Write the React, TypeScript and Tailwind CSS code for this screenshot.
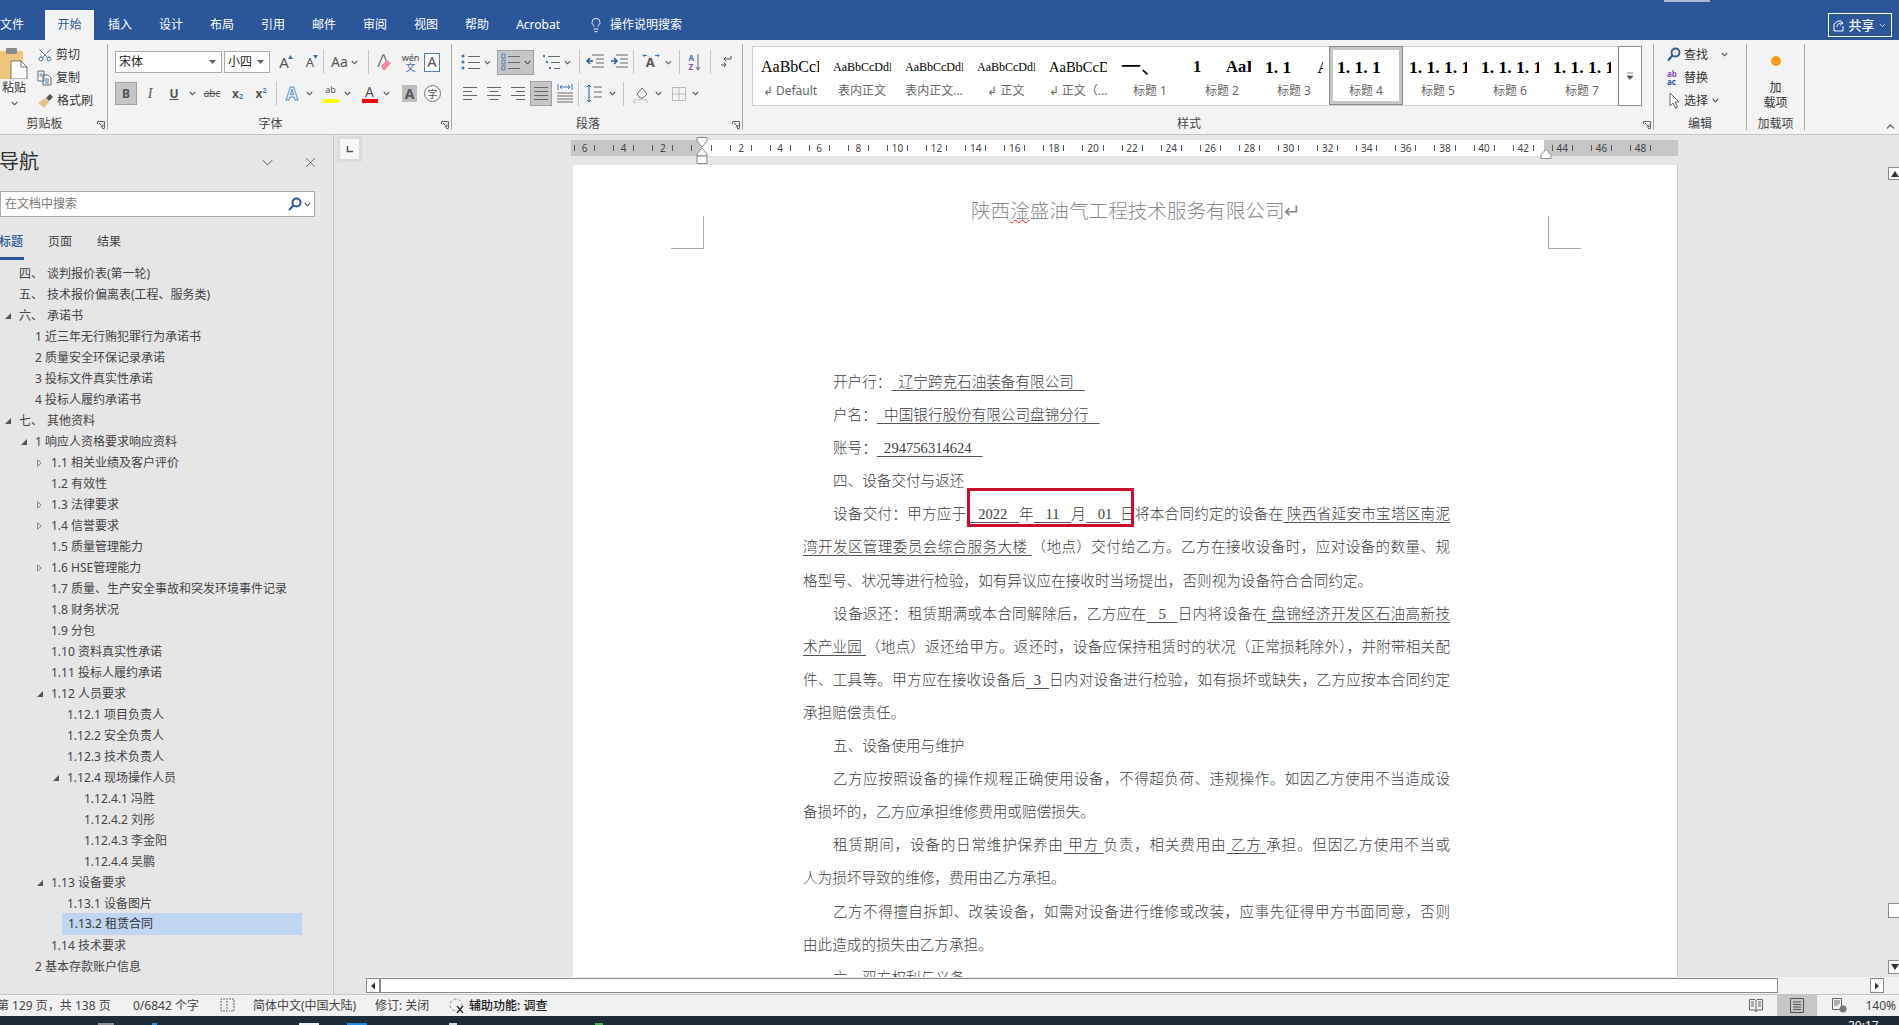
import React from 'react';
import { ChevronDown, ChevronUp, Lightbulb, Scissors, X } from 'lucide-react';

const tabs = ['插入', '设计', '布局', '引用', '邮件', '审阅', '视图', '帮助'];

type Row = { level: number; text: string; tri?: 'open' | 'closed'; lead?: string; selected?: boolean };

const tree: Row[] = [
  { level: 0, lead: '四、', text: '谈判报价表(第一轮)' },
  { level: 0, lead: '五、', text: '技术报价偏离表(工程、服务类)' },
  { level: 0, lead: '六、', text: '承诺书', tri: 'open' },
  { level: 1, text: '1 近三年无行贿犯罪行为承诺书' },
  { level: 1, text: '2 质量安全环保记录承诺' },
  { level: 1, text: '3 投标文件真实性承诺' },
  { level: 1, text: '4 投标人履约承诺书' },
  { level: 0, lead: '七、', text: '其他资料', tri: 'open' },
  { level: 1, text: '1 响应人资格要求响应资料', tri: 'open' },
  { level: 2, text: '1.1 相关业绩及客户评价', tri: 'closed' },
  { level: 2, text: '1.2 有效性' },
  { level: 2, text: '1.3 法律要求', tri: 'closed' },
  { level: 2, text: '1.4 信誉要求', tri: 'closed' },
  { level: 2, text: '1.5 质量管理能力' },
  { level: 2, text: '1.6 HSE管理能力', tri: 'closed' },
  { level: 2, text: '1.7 质量、生产安全事故和突发环境事件记录' },
  { level: 2, text: '1.8 财务状况' },
  { level: 2, text: '1.9 分包' },
  { level: 2, text: '1.10 资料真实性承诺' },
  { level: 2, text: '1.11 投标人履约承诺' },
  { level: 2, text: '1.12 人员要求', tri: 'open' },
  { level: 3, text: '1.12.1 项目负责人' },
  { level: 3, text: '1.12.2 安全负责人' },
  { level: 3, text: '1.12.3 技术负责人' },
  { level: 3, text: '1.12.4 现场操作人员', tri: 'open' },
  { level: 4, text: '1.12.4.1 冯胜' },
  { level: 4, text: '1.12.4.2 刘彤' },
  { level: 4, text: '1.12.4.3 李金阳' },
  { level: 4, text: '1.12.4.4 吴鹏' },
  { level: 2, text: '1.13 设备要求', tri: 'open' },
  { level: 3, text: '1.13.1 设备图片' },
  { level: 3, text: '1.13.2 租赁合同', selected: true },
  { level: 2, text: '1.14 技术要求' },
  { level: 1, text: '2 基本存款账户信息' },
];

const levelPad = ['pl-[5px]', 'pl-[21px]', 'pl-[37px]', 'pl-[53px]', 'pl-[70px]'];

const styleItems = [
  { sample: 'AaBbCcI', label: '↲ Default', cls: 'text-[16px]' },
  { sample: 'AaBbCcDdEe', label: '表内正文', cls: 'text-[12px]' },
  { sample: 'AaBbCcDdEe', label: '表内正文...', cls: 'text-[12px]' },
  { sample: 'AaBbCcDdEe', label: '↲ 正文', cls: 'text-[12px]' },
  { sample: 'AaBbCcDd', label: '↲ 正文\uFF08...', cls: 'text-[14.5px]' },
  { sample: '一、', label: '标题 1', cls: 'text-[20px]' },
  { sample: '1\u00a0\u00a0\u00a0\u00a0\u00a0\u00a0AaI', label: '标题 2', cls: 'text-[16.5px] font-bold' },
  { sample: '1. 1\u00a0\u00a0\u00a0\u00a0\u00a0\u00a0AaBb', label: '标题 3', cls: 'text-[17.5px] font-bold' },
  { sample: '1. 1. 1', label: '标题 4', cls: 'text-[17.5px] font-bold', active: true },
  { sample: '1. 1. 1. 1', label: '标题 5', cls: 'text-[17.5px] font-bold' },
  { sample: '1. 1. 1. 1', label: '标题 6', cls: 'text-[17.5px] font-bold' },
  { sample: '1. 1. 1. 1', label: '标题 7', cls: 'text-[17.5px] font-bold' },
];

const rulerLeft = [6, 4, 2];
const rulerRight = Array.from({ length: 24 }, (_, i) => (i + 1) * 2);

// body text: | switches underline on and off, ascii punctuation becomes full width
const fullWidth = (s: string) =>
  s.replace(/,/g, '\uFF0C').replace(/:/g, '\uFF1A').replace(/\(/g, '\uFF08').replace(/\)/g, '\uFF09').replace(/~/g, '\u00a0');

const bodyLines: { text: string; first?: boolean; full?: boolean }[] = [
  { first: true, text: '开户行:|~~辽宁跨克石油装备有限公司~~~' },
  { first: true, text: '户名:|~~中国银行股份有限公司盘锦分行~~~' },
  { first: true, text: '账号:|~~294756314624~~~' },
  { first: true, text: '四、设备交付与返还' },
  { first: true, full: true, text: '设备交付:甲方应于|~~~2022~~~|年|~~~11~~~|月|~~~01~~|日将本合同约定的设备在|~陕西省延安市宝塔区南泥' },
  { full: true, text: '|湾开发区管理委员会综合服务大楼~|(地点)交付给乙方。乙方在接收设备时,应对设备的数量、规' },
  { text: '格型号、状况等进行检验,如有异议应在接收时当场提出,否则视为设备符合合同约定。' },
  { first: true, full: true, text: '设备返还:租赁期满或本合同解除后,乙方应在|~~~5~~~|日内将设备在|~盘锦经济开发区石油高新技' },
  { full: true, text: '|术产业园~|(地点)返还给甲方。返还时,设备应保持租赁时的状况(正常损耗除外),并附带相关配' },
  { full: true, text: '件、工具等。甲方应在接收设备后|~~3~~|日内对设备进行检验,如有损坏或缺失,乙方应按本合同约定' },
  { text: '承担赔偿责任。' },
  { first: true, text: '五、设备使用与维护' },
  { first: true, full: true, text: '乙方应按照设备的操作规程正确使用设备,不得超负荷、违规操作。如因乙方使用不当造成设' },
  { text: '备损坏的,乙方应承担维修费用或赔偿损失。' },
  { first: true, full: true, text: '租赁期间,设备的日常维护保养由|~甲方~|负责,相关费用由|~乙方~|承担。但因乙方使用不当或' },
  { text: '人为损坏导致的维修,费用由乙方承担。' },
  { first: true, full: true, text: '乙方不得擅自拆卸、改装设备,如需对设备进行维修或改装,应事先征得甲方书面同意,否则' },
  { text: '由此造成的损失由乙方承担。' },
  { first: true, text: '六、双方权利与义务' },
];

function Chev({ className = '' }: { className?: string }) {
  return (
    <svg width="7" height="5" viewBox="0 0 7 5" className={className}>
      <path d="M.8 1 3.5 3.8 6.2 1" fill="none" stroke="#555" strokeWidth="1.1" />
    </svg>
  );
}

function Launcher() {
  return (
    <svg width="8" height="8" viewBox="0 0 8 8" className="absolute right-[2px] top-[5px]">
      <path d="M.5 3V.5H7.5V7.5H5M2 2l4 4M6 3.5V6H3.5" fill="none" stroke="#666" strokeWidth="1" />
    </svg>
  );
}

function TextLines({ rows, align = 'left', w = 14 }: { rows: number; align?: 'left' | 'center' | 'right' | 'full'; w?: number }) {
  return (
    <svg width={w} height={rows * 4} viewBox={`0 0 ${w} ${rows * 4}`}>
      {Array.from({ length: rows }).map((_, i) => {
        const short = align !== 'full' && i % 2 === 1;
        const len = short ? w - 5 : w;
        const x = align === 'center' ? (w - len) / 2 : align === 'right' ? w - len : 0;
        return <rect key={i} x={x} y={i * 4 + 1} width={len} height="1" fill="#666" />;
      })}
    </svg>
  );
}

function ListIcon({ kind }: { kind: 'bullet' | 'number' | 'multi' }) {
  const ys = [3, 9, 15];
  return (
    <svg width="20" height="18" viewBox="0 0 20 18">
      {ys.map((y, i) => (
        <g key={y}>
          {kind === 'bullet' && <circle cx="2" cy={y} r="1.5" fill="#3f76b4" />}
          {kind === 'number' && <rect x="1" y={y - 2} width="3" height="4" fill="none" stroke="#3f76b4" strokeWidth="0.8" />}
          {kind === 'multi' && <rect x={1 + i * 3} y={y - 1} width="2" height="2" fill="#3f76b4" />}
          <rect x={kind === 'multi' ? 6 + i * 3 : 7} y={y} width={kind === 'multi' ? 12 - i * 3 : 12} height="1" fill="#666" />
        </g>
      ))}
    </svg>
  );
}

function Sep({ className = 'h-[24px]' }: { className?: string }) {
  return <div className={`w-px bg-[#c6c6c6] shrink-0 ${className}`} />;
}

function Group({ w, label, launcher, children }: { w: string; label: string; launcher?: boolean; children: React.ReactNode }) {
  return (
    <div className={`${w} shrink-0 h-[86px] mt-[4px] border-r border-[#a8a8a8] flex flex-col`}>
      <div className="h-[72px] shrink-0 relative">{children}</div>
      <div className={`h-[16px] shrink-0 relative flex items-center justify-center text-[12px] leading-none text-[#444] ${launcher ? 'pr-[18px]' : ''}`}>
        {label}
        {launcher && <Launcher />}
      </div>
    </div>
  );
}

function Clipboard() {
  return (
    <div className="flex h-full">
      <div className="w-[30px] -ml-[1px] flex flex-col items-center">
        <svg width="30" height="31" viewBox="0 0 30 31" className="mt-[4px]">
          <rect x="1" y="3" width="23" height="28" rx="1" fill="#efc67e" />
          <rect x="7" y="0" width="11" height="6" rx="1" fill="#8a8a8a" />
          <path d="M12 13h10l6 6v12H12z" fill="#fff" stroke="#777" />
          <path d="M22 13v6h6" fill="none" stroke="#777" />
        </svg>
        <span className="text-[12px] leading-[14px] mt-[2px] text-[#333]">粘贴</span>
        <Chev className="mt-[6px]" />
      </div>
      <div className="ml-[8px] -mt-[1px] flex flex-col text-[12px] text-[#333]">
        <div className="h-[23px] flex items-center gap-[2px]">
          <Scissors size={16} color="#4d6f99" strokeWidth={1.4} className="-rotate-90" />
          <span className="ml-[1px]">剪切</span>
        </div>
        <div className="h-[23px] flex items-center gap-[3px]">
          <svg width="16" height="16" viewBox="0 0 16 16">
            <path d="M1 1h6v10H1zM6 5h5l3 3v7H6z" fill="#fff" stroke="#666" />
            <path d="M8 9h4M8 11h4M8 13h4M2.500 4h3M2.500 6h3" stroke="#3f76b4" />
          </svg>
          复制
        </div>
        <div className="h-[23px] flex items-center gap-[3px]">
          <svg width="17" height="16" viewBox="0 0 17 16">
            <path d="M1 10 8 5l4 4-5 6z" fill="#e9c183" />
            <path d="M9 5l4-4 3 3-4 4z" fill="#555" />
          </svg>
          格式刷
        </div>
      </div>
    </div>
  );
}

function FontGroup() {
  return (
    <div className="pl-[7px] pt-[7px] text-[#555]">
      <div className="flex items-center h-[22px]">
        <div className="w-[107px] h-full bg-white border border-[#ababab] flex items-center justify-between pl-[3px] pr-[5px] text-[12px] text-[#222]">
          宋体
          <svg width="7" height="4" viewBox="0 0 7 4"><path d="M0 0h7L3.500 4z" fill="#666" /></svg>
        </div>
        <div className="w-[46px] ml-[2px] h-full bg-white border border-[#ababab] flex items-center justify-between pl-[3px] pr-[5px] text-[12px] text-[#222]">
          小四
          <svg width="7" height="4" viewBox="0 0 7 4"><path d="M0 0h7L3.500 4z" fill="#666" /></svg>
        </div>
        <div className="w-[26px] ml-[1px] flex justify-center text-[15px] leading-none relative">
          A
          <svg width="5" height="4" viewBox="0 0 5 4" className="absolute right-[4px] top-0"><path d="M0 4h5L2.500 0z" fill="#3f76b4" /></svg>
        </div>
        <div className="w-[26px] flex justify-center text-[13px] leading-none relative">
          A
          <svg width="5" height="4" viewBox="0 0 5 4" className="absolute right-[5px] -top-[1px]"><path d="M0 0h5L2.500 4z" fill="#3f76b4" /></svg>
        </div>
        <Sep />
        <div className="w-[44px] pl-[7px] flex items-center gap-[3px] text-[14px] leading-none">
          Aa
          <Chev />
        </div>
        <Sep />
        <div className="w-[30px] flex justify-center">
          <svg width="16" height="18" viewBox="0 0 16 18">
            <path d="M2 14 7 2l1 0 3 8" fill="none" stroke="#777" strokeWidth="1.400" />
            <path d="M5 13l6-6 4 3-6 7H7z" fill="#ee8a9c" />
          </svg>
        </div>
        <div className="w-[23px] flex flex-col items-center leading-none">
          <span className="text-[9px] text-[#444]">wén</span>
          <span className="text-[10px] text-[#3f76b4]">文</span>
        </div>
        <div className="ml-[2px] w-[16px] h-[19px] border border-[#5b7ea8] bg-white flex items-center justify-center text-[14px] leading-none">A</div>
      </div>
      <div className="flex items-center h-[23px] mt-[9px]">
        <div className="w-[22px] h-full bg-[#c6c6c6] border border-[#a0a0a0] flex items-center justify-center text-[12px] font-bold">B</div>
        <div className="w-[24px] flex justify-center font-['Liberation_Serif',serif] italic text-[14px] ml-[1px]">I</div>
        <div className="w-[24px] flex justify-center underline text-[12px] font-bold">U</div>
        <Chev className="ml-[3px]" />
        <div className="w-[24px] ml-[4px] flex justify-center line-through text-[10px]">abc</div>
        <div className="w-[23px] ml-[2px] flex justify-center items-center font-bold text-[12px] leading-none">x<span className="text-[7px] text-[#3f76b4] mt-[6px]">2</span></div>
        <div className="w-[24px] flex justify-center items-center font-bold text-[12px] leading-none">x<span className="text-[7px] text-[#3f76b4] -mt-[6px]">2</span></div>
        <Sep className="h-[24px] ml-[3px]" />
        <div className="w-[30px] flex justify-center font-bold text-[17px] leading-none text-white [-webkit-text-stroke:1px_#5b8fc9]">A</div>
        <Chev className="-ml-[1px]" />
        <div className="ml-[9px] w-[17px] flex flex-col items-center leading-none">
          <span className="text-[9px] h-[11px]">ab</span>
          <span className="w-[16px] h-[4px] bg-[#ffff00] mt-[3px]" />
        </div>
        <Chev className="ml-[5px]" />
        <div className="ml-[10px] w-[17px] flex flex-col items-center leading-none">
          <span className="text-[14px] h-[13px]">A</span>
          <span className="w-[16px] h-[4px] bg-[#ff0000] mt-[1px]" />
        </div>
        <Chev className="ml-[5px]" />
        <div className="ml-[12px] w-[15px] h-[17px] bg-[#bdbdbd] flex items-center justify-center text-[14px] leading-none font-bold">A</div>
        <div className="ml-[7px] w-[17px] h-[17px] rounded-full border border-[#777] flex items-center justify-center text-[10px] leading-none">字</div>
      </div>
    </div>
  );
}

function ParagraphGroup() {
  return (
    <div className="pl-[6px] pt-[7px] text-[#555]">
      <div className="flex items-center h-[22px]">
        <div className="w-[26px] flex justify-center"><ListIcon kind="bullet" /></div>
        <Chev />
        <div className="ml-[7px] w-[37px] h-[25px] bg-[#c6c6c6] border border-[#a0a0a0] flex items-center justify-center gap-[3px]">
          <ListIcon kind="number" />
          <Chev />
        </div>
        <div className="w-[26px] ml-[5px] flex justify-center"><ListIcon kind="multi" /></div>
        <Chev />
        <Sep className="h-[24px] ml-[8px]" />
        <div className="w-[24px] ml-[3px] flex justify-center">
          <svg width="18" height="16" viewBox="0 0 18 16">
            <path d="M6 1h12M10 5h8M10 9h8M6 13h12" stroke="#666" />
            <path d="M7 7H1M4 4 1 7l3 3" fill="none" stroke="#2b579a" strokeWidth="1.500" />
          </svg>
        </div>
        <div className="w-[24px] flex justify-center">
          <svg width="18" height="16" viewBox="0 0 18 16">
            <path d="M6 1h12M10 5h8M10 9h8M6 13h12" stroke="#666" />
            <path d="M1 7h6M4 4l3 3-3 3" fill="none" stroke="#2b579a" strokeWidth="1.500" />
          </svg>
        </div>
        <Sep className="h-[24px] ml-[2px]" />
        <div className="w-[30px] ml-[2px] flex justify-center items-center relative text-[13px] font-bold leading-none">
          A
          <svg width="18" height="5" viewBox="0 0 18 5" className="absolute -top-[3px] left-[6px]"><path d="M1 2.500h4M13 2.500h4M2.500 1 1 2.500 2.500 4M15.500 1 17 2.500 15.500 4" fill="none" stroke="#3f76b4" /></svg>
        </div>
        <Chev />
        <Sep className="h-[24px] ml-[7px]" />
        <div className="w-[30px] flex justify-center items-center gap-[1px] leading-none">
          <span className="flex flex-col text-[8px] font-bold leading-[9px]"><span className="text-[#3f76b4]">A</span><span className="text-[#8a4fbf]">Z</span></span>
          <svg width="6" height="17" viewBox="0 0 6 17"><path d="M3 0v16M1 13l2 3 2-3" fill="none" stroke="#666" /></svg>
        </div>
        <Sep className="h-[24px]" />
        <div className="w-[32px] flex justify-center">
          <svg width="12" height="14" viewBox="0 0 12 14"><path d="M11 1v3H4M6 2 4 4l2 2M1 10h5M4 8l2 2-2 2" fill="none" stroke="#555" /></svg>
        </div>
      </div>
      <div className="flex items-center h-[23px] mt-[9px]">
        <div className="w-[24px] flex justify-center"><TextLines rows={4} align="left" /></div>
        <div className="w-[24px] flex justify-center"><TextLines rows={4} align="center" /></div>
        <div className="w-[24px] flex justify-center"><TextLines rows={4} align="right" /></div>
        <div className="w-[22px] h-[25px] bg-[#c6c6c6] border border-[#a0a0a0] flex items-center justify-center"><TextLines rows={4} align="full" /></div>
        <div className="w-[26px] flex justify-center">
          <svg width="16" height="19" viewBox="0 0 16 19">
            <path d="M1 0v6M15 0v6M3 3h10M5 1 3 3l2 2M11 1l2 2-2 2" fill="none" stroke="#3f76b4" />
            <path d="M0 9h16M0 12h16M0 15h16M0 18h16" stroke="#666" />
          </svg>
        </div>
        <Sep className="h-[24px]" />
        <div className="w-[30px] flex justify-center">
          <svg width="16" height="19" viewBox="0 0 16 19">
            <path d="M3 1v17M1 3l2-2 2 2M1 16l2 2 2-2" fill="none" stroke="#2b579a" />
            <path d="M8 3h8M8 8h8M8 13h8" stroke="#666" />
          </svg>
        </div>
        <Chev />
        <Sep className="h-[24px] ml-[7px]" />
        <div className="w-[26px] ml-[5px] flex justify-center">
          <svg width="18" height="18" viewBox="0 0 18 18">
            <path d="M4 9 9 3l5 6-4 4H7z" fill="#fff" stroke="#666" />
            <rect x="1" y="15" width="13" height="3" fill="#fff" stroke="#888" strokeWidth="0.600" />
          </svg>
        </div>
        <Chev />
        <div className="w-[26px] ml-[4px] flex justify-center">
          <svg width="14" height="14" viewBox="0 0 14 14"><path d="M.5.500h13v13H.500zM7 .500v13M.5 7h13" fill="none" stroke="#888" strokeDasharray="1 1" /></svg>
        </div>
        <Chev />
      </div>
    </div>
  );
}

function StylesGroup() {
  return (
    <div className="pl-[9px] pt-[2px]">
      <div className="w-[890px] h-[60px] bg-white border border-[#d2d2d2] flex pl-[1px] font-['Liberation_Serif','Noto_Sans_CJK_SC',serif]">
        {styleItems.map(item => (
          <div
            key={item.label}
            className={`w-[72px] shrink-0 flex flex-col items-center ${item.active ? 'border-[3px] border-[#c6c6c6] outline outline-1 outline-[#8a8a8a] h-[57px]' : 'h-[58px]'}`}
          >
            <div className={`w-[58px] overflow-hidden whitespace-nowrap text-black leading-[24px] ${item.active ? 'mt-[5px]' : 'mt-[8px]'} ${item.cls}`}>
              {item.sample}
            </div>
            <div className="mt-[4px] text-[12px] leading-[16px] text-[#666] font-['Noto_Sans','Noto_Sans_CJK_SC',sans-serif] whitespace-nowrap">
              {item.label}
            </div>
          </div>
        ))}
        <div className="ml-auto -my-px -mr-px w-[24px] border border-[#8a8a8a] flex flex-col items-center justify-center">
          <svg width="8" height="8" viewBox="0 0 8 8">
            <path d="M1 1h6M1 4h6L4 7.500z" fill="#555" stroke="#555" strokeWidth="0.700" />
          </svg>
        </div>
      </div>
    </div>
  );
}

function EditGroup() {
  return (
    <div className="-mt-[1px] pl-[13px] flex flex-col text-[12px] text-[#333]">
      <div className="h-[23px] flex items-center gap-[3px]">
        <svg width="14" height="15" viewBox="0 0 14 15"><circle cx="8.500" cy="5.500" r="4" fill="none" stroke="#2b579a" strokeWidth="1.800" /><path d="M5.500 8.500 1 13.500" stroke="#2b579a" strokeWidth="2.200" /></svg>
        查找
        <Chev className="ml-[10px]" />
      </div>
      <div className="h-[23px] flex items-center gap-[3px]">
        <span className="w-[14px] flex flex-col text-[8px] leading-[8px] font-bold text-[#8a4fbf]">ab<span className="text-[#2b579a]">ac</span></span>
        替换
      </div>
      <div className="h-[23px] flex items-center gap-[3px]">
        <svg width="14" height="17" viewBox="0 0 14 17"><path d="M3 1v13l3-3 2.500 5 2-1-2.500-5h4z" fill="#fff" stroke="#666" /></svg>
        选择
        <Chev className="ml-[1px]" />
      </div>
    </div>
  );
}

function AddinsGroup() {
  return (
    <div className="flex flex-col items-center text-[12px] leading-[14px] text-[#333]">
      <span className="mt-[12px] w-[10px] h-[10px] rounded-full bg-[#f79a1e]" />
      <span className="mt-[15px]">加</span>
      <span className="mt-[1px]">载项</span>
    </div>
  );
}

function Ribbon() {
  return (
    <div className="h-[95px] shrink-0 bg-[#f3f3f3] border-b border-[#c6c6c6] flex relative">
      <Group w="w-[108px]" label="剪贴板" launcher><Clipboard /></Group>
      <Group w="w-[344px]" label="字体" launcher><FontGroup /></Group>
      <Group w="w-[291px]" label="段落" launcher><ParagraphGroup /></Group>
      <Group w="w-[911px]" label="样式" launcher><StylesGroup /></Group>
      <Group w="w-[93px]" label="编辑"><EditGroup /></Group>
      <Group w="w-[58px]" label="加载项"><AddinsGroup /></Group>
      <ChevronUp size={13} color="#555" className="absolute right-[2px] bottom-[1px]" />
    </div>
  );
}

function TitleTabs() {
  return (
    <div className="h-[40px] shrink-0 bg-[#2b579a] flex text-white text-[12px] leading-none relative">
      <div className="w-[25px] flex items-center mt-[10px] overflow-hidden whitespace-nowrap">文件</div>
      <div className="ml-[20px] w-[49px] mt-[10px] bg-[#f3f3f3] text-[#2b579a] flex items-center justify-center">开始</div>
      <div className="flex items-center mt-[10px] pl-[14px] gap-[27px]">
        {tabs.map(t => <span key={t}>{t}</span>)}
        <span>Acrobat</span>
      </div>
      <div className="flex items-center mt-[10px] ml-[28px] gap-[6px]">
        <Lightbulb size={16} strokeWidth={1.3} />
        <span>操作说明搜索</span>
      </div>
      <div className="absolute left-[1664px] top-0 w-[46px] h-[2px] bg-[#a9bbd6]" />
      <div className="ml-auto mr-[7px] mt-[13px] w-[64px] h-[24px] border border-white flex items-center justify-center gap-[3px] font-medium">
        <svg width="12" height="13" viewBox="0 0 12 13"><path d="M1 12V5l4-3h2M1 12h9V7" fill="none" stroke="#fff" /><path d="M4 8c0-3 2-4 5-4M7 1.500 10 4 7 6.500" fill="none" stroke="#fff" /></svg>
        <span className="text-[13px]">共享</span>
        <ChevronDown size={9} />
      </div>
    </div>
  );
}

function Sidebar() {
  return (
    <aside className="w-[334px] shrink-0 border-r border-[#c6c6c6] bg-[#e6e6e6] flex flex-col overflow-hidden text-[12px] text-[#444]">
      <div className="h-[54px] shrink-0 flex items-center">
        <span className="-ml-[1px] text-[20px] leading-none text-[#333]">导航</span>
        <ChevronDown size={19} strokeWidth={1} className="ml-[219px]" color="#444" />
        <X size={17} strokeWidth={1} className="ml-[25px]" color="#444" />
      </div>
      <div className="mt-[2px] h-[26px] w-[315px] shrink-0 bg-white border border-[#ababab] flex items-center pl-[4px] pr-[3px] text-[#777]">
        在文档中搜索
        <svg width="14" height="14" viewBox="0 0 14 14" className="ml-auto">
          <circle cx="8.500" cy="5.500" r="4" fill="none" stroke="#2b579a" strokeWidth="2" />
          <path d="M5.500 8.500 1 13" stroke="#2b579a" strokeWidth="2" />
        </svg>
        <Chev className="ml-[2px]" />
      </div>
      <div className="h-[43px] shrink-0 flex text-[12px] gap-[24px]">
        <div className="w-[24px] flex flex-col text-[#2b579a] font-medium">
          <span className="mt-[17px] leading-[16px] h-[23px] whitespace-nowrap -ml-[1px]">标题</span>
          <span className="h-[3px] bg-[#2b579a]" />
        </div>
        <span className="mt-[17px] leading-[16px]">页面</span>
        <span className="mt-[17px] leading-[16px] ml-[1px]">结果</span>
      </div>
      <div className="mt-[3px] flex flex-col">
        {tree.map(row => (
          <div
            key={row.text}
            className={`flex items-center whitespace-nowrap ${row.selected ? 'ml-[62px] w-[240px] mt-[-1px] pl-[6px] bg-[#c0d5f2] text-[#333] h-[22px]' : `h-[21px] ${levelPad[row.level]}`}`}
          >
            {!row.selected && (
              <span className="w-[14px] shrink-0 flex items-center">
                {row.tri === 'open' && (
                  <svg width="6" height="6" viewBox="0 0 6 6"><path d="M6 0v6H0z" fill="#555" /></svg>
                )}
                {row.tri === 'closed' && (
                  <svg width="5" height="8" viewBox="0 0 5 8"><path d="M.5.800 4.300 4 .5 7.200z" fill="none" stroke="#888" /></svg>
                )}
              </span>
            )}
            {row.lead && <span className="w-[28px] shrink-0">{row.lead}</span>}
            <span>{row.text}</span>
          </div>
        ))}
      </div>
    </aside>
  );
}

function RulerCell({ n }: { n?: number }) {
  return (
    <div className="w-[39.12px] shrink-0 flex items-center justify-between px-[9px]">
      <span className="w-px h-[6px] bg-[#555]" />
      <span className="text-[10px] leading-none text-[#444]">{n}</span>
      <span className="w-px h-[6px] bg-[#555]" />
    </div>
  );
}

function TopRuler() {
  return (
    <div className="h-[30px] shrink-0 flex items-start pl-[3px]">
      <div className="mt-[1px] w-[25px] h-[26px] bg-[#dcdcdc] p-[3px] flex">
        <div className="flex-1 bg-[#f7f7f7] flex items-center justify-center">
          <svg width="7" height="7" viewBox="0 0 7 7"><path d="M1.500 0v5.500H7" fill="none" stroke="#555" strokeWidth="1.500" /></svg>
        </div>
      </div>
      <div className="relative ml-[209px] mt-[5px] w-[1107px] h-[16px] flex overflow-hidden bg-[linear-gradient(to_right,#c6c6c6_131px,#ffffff_131px,#ffffff_973px,#c6c6c6_973px)]">
        <div className="-ml-[6px] flex">
          {rulerLeft.map(n => <RulerCell key={n} n={n} />)}
          <RulerCell />
          {rulerRight.map(n => <RulerCell key={n} n={n} />)}
        </div>
      </div>
      <svg width="14" height="27" viewBox="0 0 14 27" className="absolute left-[695px] top-[137px]">
        <path d="M2 .500h10V4L7 10 2 4zM7 11l5 6v2H2v-2z" fill="#fff" stroke="#888" />
        <rect x="2" y="19" width="10" height="7.500" fill="#fff" stroke="#888" />
      </svg>
      <svg width="12" height="10" viewBox="0 0 12 10" className="absolute left-[1540px] top-[149px]">
        <path d="M6 .500l5 5v4H1v-4z" fill="#fff" stroke="#888" />
      </svg>
    </div>
  );
}

function Line({ first, full, text }: { first?: boolean; full?: boolean; text: string }) {
  return (
    <div className={`h-[33.1px] leading-[33.1px] w-[647px] whitespace-nowrap ${first ? 'pl-[30px]' : ''} ${full ? '[text-align-last:justify]' : ''}`}>
      {fullWidth(text).split('|').map((part, i) =>
        i % 2 === 1 ? (
          <span key={i} className="underline underline-offset-[3px] decoration-[#555]">{part}</span>
        ) : (
          <span key={i}>{part}</span>
        ),
      )}
    </div>
  );
}

function Page() {
  return (
    <div className="relative w-[1105px] h-full bg-white border-r border-[#c6c6c6] overflow-hidden shrink-0">
      <div className="absolute left-[98px] top-[51px] w-[33px] h-[33px] border-r border-b border-[#aaaaaa]" />
      <div className="absolute left-[975px] top-[51px] w-[33px] h-[33px] border-l border-b border-[#aaaaaa]" />
      <div className="absolute left-[394px] top-[323px] w-[167px] h-[39px] border-[3px] border-[#c8102e] z-10" />
      <div className="absolute left-[1212px] top-[647px] w-[2px] h-[4px] bg-[#e02040]" />
      <div className="pl-[398px] pt-[30px] h-[60px] text-[19.6px] leading-[30px] text-[#8a8a8a] whitespace-nowrap font-['Noto_Sans_CJK_SC',sans-serif] font-light">
        陕西<span className="underline decoration-wavy decoration-[#e02020] decoration-1">淦</span>盛油气工程技术服务有限公司↵
      </div>
      <div className="mt-[141px] pl-[230px] text-[14.6px] text-[#3d3d3d] font-['Liberation_Serif','Noto_Sans_CJK_SC',serif] font-light">
        {bodyLines.map(line => <Line key={line.text} {...line} />)}
      </div>
    </div>
  );
}

function ScrollButton({ dir }: { dir: 'left' | 'right' }) {
  const d = { left: 'M6 .500v7L2 4z', right: 'M2 .500v7L6 4z' }[dir];
  return (
    <div className="w-[14px] h-[15px] shrink-0 border border-[#8a8a8a] bg-white flex items-center justify-center">
      <svg width="8" height="8" viewBox="0 0 8 8"><path d={d} fill="#333" /></svg>
    </div>
  );
}

function DocArea() {
  return (
    <div className="flex-1 flex flex-col min-w-0 bg-[#e6e6e6]">
      <TopRuler />
      <div className="flex-1 min-h-0 flex pl-[239px] overflow-hidden">
        <Page />
        <div className="ml-auto w-[11px] flex flex-col pt-[2px] pb-[3px] relative">
          <div className="w-[14px] h-[13px] border border-[#8a8a8a] bg-white flex items-center justify-center shrink-0">
            <svg width="8" height="6" viewBox="0 0 8 6"><path d="M4 0l4 6H0z" fill="#333" /></svg>
          </div>
          <div className="mt-[723px] w-[14px] h-[15px] border border-[#8a8a8a] bg-white shrink-0" />
          <div className="mt-auto w-[14px] h-[14px] border border-[#8a8a8a] bg-white flex items-center justify-center shrink-0">
            <svg width="8" height="6" viewBox="0 0 8 6"><path d="M0 0h8L4 6z" fill="#333" /></svg>
          </div>
        </div>
      </div>
      <div className="h-[17px] shrink-0 ml-[32px] bg-[#f1f1f1] flex items-center">
        <ScrollButton dir="left" />
        <div className="w-[1398px] h-[15px] bg-white border border-[#8a8a8a]" />
        <div className="ml-auto mr-[15px]"><ScrollButton dir="right" /></div>
      </div>
    </div>
  );
}

function StatusBar() {
  return (
    <div className="h-[22px] shrink-0 border-t border-[#c6c6c6] bg-[#f1f1f1] flex items-center text-[12px] text-[#444] whitespace-nowrap">
      <span className="-ml-[3px] w-[136px]">{'第 129 页\uFF0C共 138 页'}</span>
      <span className="w-[87px]">0/6842 个字</span>
      <svg width="15" height="15" viewBox="0 0 15 15">
        <path d="M5 1H1v12h4M7 0v15M9 1h5v12H9" fill="none" stroke="#666" strokeDasharray="2 1" />
      </svg>
      <span className="ml-[18px] w-[122px]">简体中文(中国大陆)</span>
      <span className="w-[74px]">修订: 关闭</span>
      <svg width="18" height="16" viewBox="0 0 18 16">
        <circle cx="7" cy="7" r="6" fill="none" stroke="#888" strokeDasharray="3 2" />
        <path d="M8 8l6 7M14 8l-6 7" stroke="#333" strokeWidth="1.400" />
      </svg>
      <span className="ml-[2px] text-[#222] font-medium">辅助功能: 调查</span>
      <div className="ml-auto flex items-center h-full">
        <svg width="14" height="15" viewBox="0 0 14 15">
          <path d="M.5 1.500h5.500l1 1 1-1h5.500V12H8l-1 1.500L6 12H.5zM7 2.500v11M2 4h3M2 6h3M2 8h3M9 4h3M9 6h3M9 8h3" fill="none" stroke="#666" />
        </svg>
        <div className="ml-[14px] w-[40px] h-full bg-[#c6c6c6] flex items-center justify-center">
          <svg width="14" height="15" viewBox="0 0 14 15"><path d="M.5.500h13v14H.500zM3 4h8M3 6.500h8M3 9h8M3 11.500h8" fill="none" stroke="#555" /></svg>
        </div>
        <svg width="15" height="15" viewBox="0 0 15 15" className="ml-[15px]">
          <path d="M.5.500h9v11H.500zM2 3h6M2 5h6M2 7h4" fill="none" stroke="#666" />
          <circle cx="11" cy="11" r="3.500" fill="#777" />
        </svg>
        <span className="ml-[18px] mr-[3px]">140%</span>
      </div>
    </div>
  );
}

function Taskbar() {
  return (
    <div className="h-[9px] shrink-0 bg-[#1d2c37] flex items-end overflow-hidden relative">
      <span className="ml-[98px] w-[16px] h-[2px] bg-[#8a8f94]" />
      <span className="ml-[38px] w-[5px] h-[2px] bg-[#2f8fd8]" />
      <span className="ml-[142px] w-[20px] h-[2px] bg-[#f2f2f2]" />
      <span className="ml-[28px] w-[20px] h-[2px] bg-[#1e88e5]" />
      <span className="ml-[82px] w-[8px] h-[2px] bg-[#d8d8d8]" />
      <span className="ml-[138px] w-[8px] h-[2px] bg-[#4caf50]" />
      <span className="absolute left-[1848px] top-[4px] text-[12px] leading-none text-white">20:17</span>
    </div>
  );
}

export default function App() {
  return (
    <div className="relative w-[1899px] h-[1025px] overflow-hidden flex flex-col bg-[#e6e6e6] font-['Noto_Sans','Noto_Sans_CJK_SC',sans-serif]">
      <TitleTabs />
      <Ribbon />
      <div className="h-[859px] shrink-0 flex">
        <Sidebar />
        <DocArea />
      </div>
      <StatusBar />
      <Taskbar />
    </div>
  );
}
